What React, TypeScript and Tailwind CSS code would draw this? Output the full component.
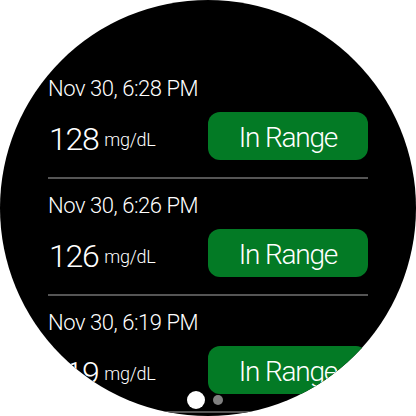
import React from "react";

type Reading = {
  time: string;
  value: number;
};

const readings: Reading[] = [
  { time: "Nov 30, 6:28 PM", value: 128 },
  { time: "Nov 30, 6:26 PM", value: 126 },
  { time: "Nov 30, 6:19 PM", value: 119 },
];

function ReadingRow({ reading }: { reading: Reading }) {
  return (
    <div className="pt-[14px]">
      <div className="text-[22px] leading-[26px] font-light tracking-[-0.45px] text-white">{reading.time}</div>
      <div className="mt-[10px] flex items-start justify-between h-[48px]">
        <div className="pt-[11px] pl-[1px] text-white font-light whitespace-nowrap">
          <span className="text-[32px] leading-[32px] tracking-[-1.3px]">{reading.value}</span>
          <span className="ml-[6px] text-[18px] tracking-[-0.3px] align-[4px]">mg/dL</span>
        </div>
        <div className="w-[160px] h-[48px] pt-[4px] rounded-[12px] bg-[#037a25] flex items-center justify-center text-white text-[28px] font-light tracking-[-1.2px]">
          In Range
        </div>
      </div>
      <div className="mt-[17px] h-[2px] bg-[#555555]" />
    </div>
  );
}

export default function App() {
  return (
    <div className="w-[416px] h-[416px] bg-white" style={{ fontFamily: "Roboto, sans-serif" }}>
      <div className="relative w-[416px] h-[416px] rounded-full bg-black overflow-hidden">
        <div className="px-[48px] pt-[62px]">
          {readings.map((r) => (
            <ReadingRow key={r.time} reading={r} />
          ))}
        </div>
        {/* page indicator */}
        <div className="absolute left-[187px] top-[391px] flex items-center gap-[8px]">
          <div className="w-[18px] h-[18px] rounded-full bg-white" />
          <div className="w-[10px] h-[10px] rounded-full bg-[#808080]" />
        </div>
      </div>
    </div>
  );
}
